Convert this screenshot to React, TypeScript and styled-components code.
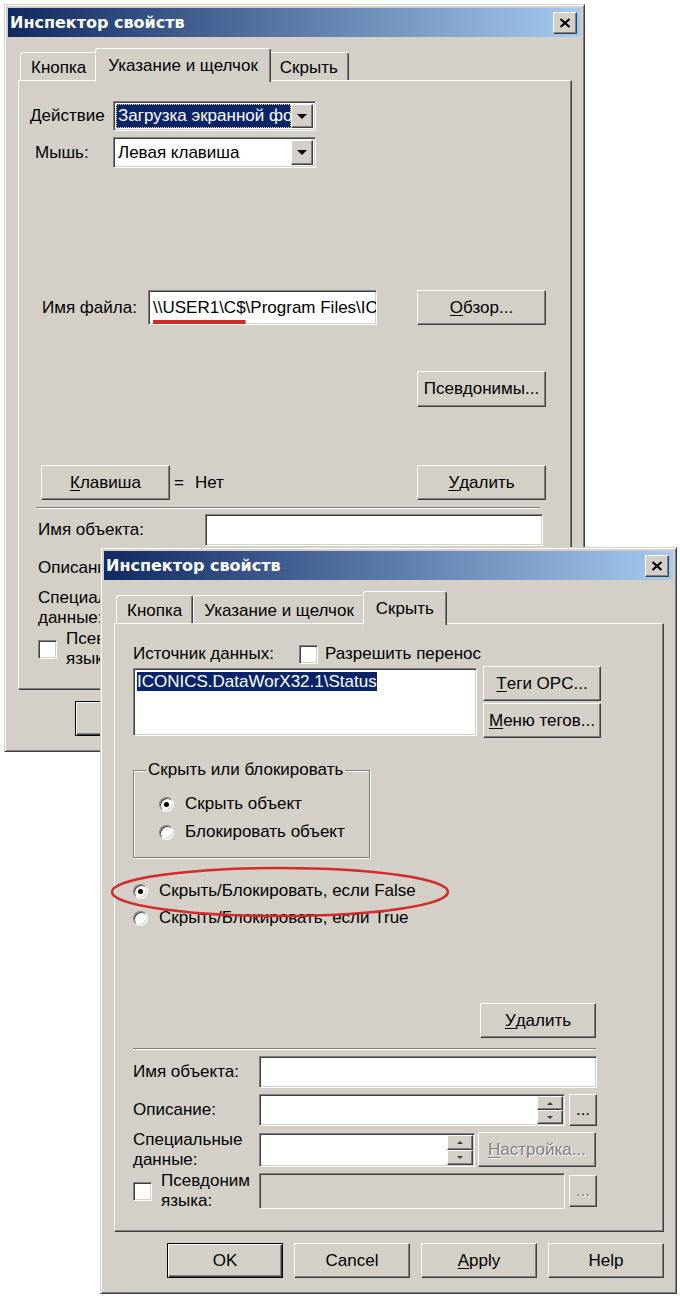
import React from 'react';
import styled, { createGlobalStyle, css } from 'styled-components';

const FACE = '#d4d0c8';
const SHADOW = '#808080';
const DARK = '#404040';
const NAVY = '#0a246a';

const GlobalStyle = createGlobalStyle`
  html, body { margin: 0; padding: 0; background: #fff; }
  body {
    font-family: "Liberation Sans", Arial, sans-serif;
    font-size: 17px;
    color: #000;
  }
`;

const raised = css`
  border: 1px solid;
  border-color: #fff ${DARK} ${DARK} #fff;
  box-shadow: inset -1px -1px ${SHADOW}, inset 1px 1px ${FACE};
`;

const sunken = css`
  border: 1px solid;
  border-color: ${SHADOW} #fff #fff ${SHADOW};
  box-shadow: inset 1px 1px ${DARK}, inset -1px -1px ${FACE};
`;

const Desktop = styled.div`
  position: relative;
  width: 680px;
  height: 1298px;
  overflow: hidden;
  background: #fff;
`;

const Window = styled.div<{ $x: number; $y: number; $w: number; $h: number }>`
  position: absolute;
  left: ${(p) => p.$x}px;
  top: ${(p) => p.$y}px;
  width: ${(p) => p.$w}px;
  height: ${(p) => p.$h}px;
  box-sizing: border-box;
  display: flex;
  flex-direction: column;
  padding: 3px;
  background: ${FACE};
  border: 1px solid;
  border-color: ${FACE} ${DARK} ${DARK} ${FACE};
  box-shadow: inset 1px 1px #fff, inset -1px -1px ${SHADOW};
`;

const TitleBar = styled.div`
  flex: none;
  height: 29px;
  display: flex;
  align-items: center;
  justify-content: space-between;
  padding: 0 4px 0 2px;
  background: linear-gradient(90deg, #112a62 0%, #a6caf0 100%);
  color: #fff;
  font: bold 16px "DejaVu Sans", Tahoma, sans-serif;
`;

const CloseButton = styled.div`
  box-sizing: border-box;
  width: 24px;
  height: 22px;
  display: flex;
  align-items: center;
  justify-content: center;
  background: ${FACE};
  ${raised};
`;

const WindowBody = styled.div`
  flex: 1;
  display: flex;
  flex-direction: column;
  padding: 11px 9px 12px 10px;
`;

const TabStrip = styled.div`
  flex: none;
  height: 32px;
  display: flex;
  align-items: flex-end;
  padding-left: 2px;
`;

const Tab = styled.div<{ $active?: boolean }>`
  box-sizing: border-box;
  position: relative;
  z-index: ${(p) => (p.$active ? 2 : 1)};
  height: ${(p) => (p.$active ? 34 : 28)}px;
  margin: 0 ${(p) => (p.$active ? -2 : 0)}px ${(p) => (p.$active ? -2 : 0)}px;
  padding: ${(p) => (p.$active ? '0 12px' : '2px 10px 0')};
  display: flex;
  align-items: center;
  white-space: nowrap;
  background: ${FACE};
  border: 1px solid;
  border-bottom: none;
  border-color: #fff ${DARK} transparent #fff;
  border-radius: 3px 3px 0 0;
  box-shadow: inset -1px 0 ${SHADOW};
`;

const Panel = styled.div<{ $pad: string }>`
  flex: 1;
  position: relative;
  display: flex;
  flex-direction: column;
  padding: ${(p) => p.$pad};
  border: 1px solid;
  border-color: #fff ${DARK} ${DARK} #fff;
  box-shadow: inset -1px -1px ${SHADOW};
`;

const Footer = styled.div`
  flex: none;
  display: flex;
  justify-content: flex-end;
  gap: 11px;
  margin-top: 11px;
`;

const Button = styled.button<{ $w: number; $h: number; $ml?: number | 'auto'; $default?: boolean }>`
  box-sizing: border-box;
  flex: none;
  width: ${(p) => p.$w}px;
  height: ${(p) => p.$h}px;
  margin-left: ${(p) => (p.$ml === 'auto' ? 'auto' : `${p.$ml ?? 0}px`)};
  padding: 0;
  display: inline-flex;
  align-items: center;
  justify-content: center;
  font: inherit;
  color: #000;
  background: ${FACE};
  white-space: nowrap;
  ${raised};
  ${(p) =>
    p.$default &&
    css`
      border-color: #000;
      box-shadow: inset 1px 1px #fff, inset -1px -1px ${DARK}, inset -2px -2px ${SHADOW};
    `}
  &:disabled {
    color: ${SHADOW};
    text-shadow: 1px 1px #fff;
  }
`;

const Key = styled.span`
  text-decoration: underline;
  text-underline-offset: 2px;
`;

const Row = styled.div<{ $h?: number; $mt?: number; $gap?: number; $top?: boolean }>`
  flex: none;
  display: flex;
  align-items: ${(p) => (p.$top ? 'flex-start' : 'center')};
  height: ${(p) => (p.$h ? `${p.$h}px` : 'auto')};
  margin-top: ${(p) => p.$mt ?? 0}px;
  gap: ${(p) => p.$gap ?? 0}px;
`;

const Label = styled.div<{ $w?: number; $indent?: number }>`
  box-sizing: border-box;
  flex: none;
  display: flex;
  align-items: center;
  gap: 9px;
  width: ${(p) => (p.$w ? `${p.$w}px` : 'auto')};
  padding-left: ${(p) => p.$indent ?? 0}px;
  white-space: nowrap;
  line-height: 20px;
`;

const Text = styled.span<{ $ml?: number }>`
  margin-left: ${(p) => p.$ml ?? 0}px;
  white-space: nowrap;
`;

const Lines = styled.span`
  line-height: 20px;
`;

const Combo = styled.div<{ $w: number; $h: number }>`
  box-sizing: border-box;
  width: ${(p) => p.$w}px;
  height: ${(p) => p.$h}px;
  display: flex;
  padding: 2px;
  background: #fff;
  ${sunken};
`;

const ComboText = styled.div<{ $selected?: boolean }>`
  flex: 1;
  min-width: 0;
  display: flex;
  align-items: center;
  padding: 0 2px;
  overflow: hidden;
  white-space: nowrap;
  ${(p) =>
    p.$selected &&
    css`
      background: ${NAVY};
      color: #fff;
      outline: 1px dotted #f2e08a;
      outline-offset: -1px;
    `}
`;

const DropButton = styled.div`
  box-sizing: border-box;
  flex: none;
  width: 22px;
  display: flex;
  align-items: center;
  justify-content: center;
  background: ${FACE};
  ${raised};
`;

const Arrow = styled.span<{ $up?: boolean; $size?: number; $color?: string }>`
  width: 0;
  height: 0;
  border-left: ${(p) => p.$size ?? 5}px solid transparent;
  border-right: ${(p) => p.$size ?? 5}px solid transparent;
  ${(p) =>
    p.$up
      ? css`border-bottom: ${p.$size ?? 5}px solid ${p.$color ?? '#000'};`
      : css`border-top: ${p.$size ?? 5}px solid ${p.$color ?? '#000'};`}
`;

const TextBox = styled.div<{ $w: number; $h: number; $disabled?: boolean }>`
  box-sizing: border-box;
  flex: none;
  width: ${(p) => p.$w}px;
  height: ${(p) => p.$h}px;
  display: flex;
  align-items: center;
  padding: 1px 1px 1px 4px;
  overflow: hidden;
  white-space: nowrap;
  background: ${(p) => (p.$disabled ? FACE : '#fff')};
  ${sunken};
`;

const Marked = styled.span`
  text-decoration: underline;
  text-decoration-color: #d22b2b;
  text-decoration-thickness: 4px;
  text-underline-offset: 7px;
  text-decoration-skip-ink: none;
`;

const Spinner = styled.div`
  align-self: stretch;
  margin-left: auto;
  width: 26px;
  display: flex;
  flex-direction: column;
`;

const SpinHalf = styled.div`
  box-sizing: border-box;
  flex: 1;
  display: flex;
  align-items: center;
  justify-content: center;
  background: ${FACE};
  ${raised};
`;

const ListBox = styled.div<{ $w: number; $h: number }>`
  box-sizing: border-box;
  flex: none;
  width: ${(p) => p.$w}px;
  height: ${(p) => p.$h}px;
  margin-top: 2px;
  padding: 3px;
  background: #fff;
  ${sunken};
`;

const Selected = styled.span`
  background: ${NAVY};
  color: #fff;
  line-height: 20px;
`;

const ButtonColumn = styled.div`
  display: flex;
  flex-direction: column;
  gap: 2px;
  margin-right: -4px;
`;

const CheckBox = styled.span<{ $ml?: number }>`
  box-sizing: border-box;
  flex: none;
  display: inline-block;
  width: 19px;
  height: 19px;
  margin-left: ${(p) => p.$ml ?? 0}px;
  background: #fff;
  ${sunken};
`;

const Radio = styled.span<{ $checked?: boolean }>`
  box-sizing: border-box;
  flex: none;
  width: 15px;
  height: 15px;
  display: flex;
  align-items: center;
  justify-content: center;
  border-radius: 50%;
  background: #fff;
  border: 1px solid;
  border-color: ${SHADOW} #fff #fff ${SHADOW};
  box-shadow: inset 1px 1px ${DARK}, inset -1px -1px ${FACE};
  &::after {
    content: '';
    width: 5px;
    height: 5px;
    border-radius: 50%;
    background: #000;
    display: ${(p) => (p.$checked ? 'block' : 'none')};
  }
`;

const RadioRow = styled.div<{ $mt?: number; $ml?: number }>`
  display: flex;
  align-items: center;
  gap: 11px;
  height: 20px;
  margin-top: ${(p) => p.$mt ?? 0}px;
  margin-left: ${(p) => p.$ml ?? 0}px;
  white-space: nowrap;
`;

const Group = styled.fieldset`
  box-sizing: border-box;
  width: 237px;
  margin: 22px 0 0;
  padding: 14px 0 15px 12px;
  border: 1px solid ${SHADOW};
  box-shadow: inset 1px 1px #fff, 1px 1px 0 #fff;
  display: flex;
  flex-direction: column;
  gap: 8px;
`;

const Legend = styled.legend`
  padding: 0 2px;
  line-height: 20px;
  background: ${FACE};
`;

const Groove = styled.div<{ $mt: number; $mx?: number }>`
  flex: none;
  margin: ${(p) => p.$mt}px ${(p) => p.$mx ?? 0}px 0;
  border-top: 1px solid ${SHADOW};
  border-bottom: 1px solid #fff;
`;

const Annotation = styled.svg`
  position: absolute;
  left: 108px;
  top: 865px;
  pointer-events: none;
`;

const TABS = ['Кнопка', 'Указание и щелчок', 'Скрыть'];

type DialogProps = {
  x: number;
  y: number;
  w: number;
  h: number;
  active: number;
  pad: string;
  children: React.ReactNode;
};

function Dialog({ x, y, w, h, active, pad, children }: DialogProps) {
  return (
    <Window $x={x} $y={y} $w={w} $h={h}>
      <TitleBar>
        <span>Инспектор свойств</span>
        <CloseButton>
          <svg width="12" height="10" viewBox="0 0 12 10">
            <path d="M1.5 1 L10.5 9 M10.5 1 L1.5 9" stroke="#000" strokeWidth="2.2" />
          </svg>
        </CloseButton>
      </TitleBar>
      <WindowBody>
        <TabStrip>
          {TABS.map((t, i) => (
            <Tab key={t} $active={i === active}>
              {t}
            </Tab>
          ))}
        </TabStrip>
        <Panel $pad={pad}>{children}</Panel>
        <Footer>
          <Button $w={116} $h={35} $default>
            OK
          </Button>
          <Button $w={116} $h={35}>Cancel</Button>
          <Button $w={116} $h={35}>
            <Key>A</Key>pply
          </Button>
          <Button $w={116} $h={35}>Help</Button>
        </Footer>
      </WindowBody>
    </Window>
  );
}

const Spin = () => (
  <Spinner>
    <SpinHalf>
      <Arrow $up $size={3} $color={DARK} />
    </SpinHalf>
    <SpinHalf>
      <Arrow $size={3} $color={DARK} />
    </SpinHalf>
  </Spinner>
);

function ObjectFields({ labelW, indent, mt }: { labelW: number; indent: number; mt: number }) {
  return (
    <>
      <Row $h={32} $mt={mt}>
        <Label $w={labelW} $indent={indent}>Имя объекта:</Label>
        <TextBox $w={338} $h={32} />
      </Row>
      <Row $h={32} $mt={6}>
        <Label $w={labelW} $indent={indent}>Описание:</Label>
        <TextBox $w={306} $h={32}>
          <Spin />
        </TextBox>
        <Button $w={28} $h={32} $ml={4}>...</Button>
      </Row>
      <Row $h={35} $mt={6}>
        <Label $w={labelW} $indent={indent}>
          <Lines>
            Специальные
            <br />
            данные:
          </Lines>
        </Label>
        <TextBox $w={216} $h={34}>
          <Spin />
        </TextBox>
        <Button $w={118} $h={35} $ml={3} disabled>
          <Key>Н</Key>астройка...
        </Button>
      </Row>
      <Row $h={36} $mt={6}>
        <Label $w={labelW} $indent={indent}>
          <CheckBox />
          <Lines>
            Псевдоним
            <br />
            языка:
          </Lines>
        </Label>
        <TextBox $w={306} $h={36} $disabled />
        <Button $w={28} $h={32} $ml={4} disabled>
          ...
        </Button>
      </Row>
    </>
  );
}

export default function App() {
  return (
    <Desktop>
      <GlobalStyle />

      <Dialog x={4} y={4} w={581} h={748} active={1} pad="20px 25px 0 11px">
        <Row $h={30}>
          <Label $w={83}>Действие</Label>
          <Combo $w={203} $h={30}>
            <ComboText $selected>Загрузка экранной формы</ComboText>
            <DropButton>
              <Arrow />
            </DropButton>
          </Combo>
        </Row>
        <Row $h={31} $mt={6}>
          <Label $w={83} $indent={5}>Мышь:</Label>
          <Combo $w={203} $h={31}>
            <ComboText>Левая клавиша</ComboText>
            <DropButton>
              <Arrow />
            </DropButton>
          </Combo>
        </Row>
        <Row $h={35} $mt={122}>
          <Label $w={118} $indent={12}>Имя файла:</Label>
          <TextBox $w={229} $h={35}>
            <Marked>{'\\\\USER1\\C$'}</Marked>
            {'\\Program Files\\ICONICS'}
          </TextBox>
          <Button $w={129} $h={35} $ml="auto">
            <Key>О</Key>бзор...
          </Button>
        </Row>
        <Row $h={36} $mt={46}>
          <Button $w={129} $h={36} $ml="auto">
            Псевдонимы...
          </Button>
        </Row>
        <Row $h={35} $mt={58}>
          <Button $w={129} $h={35} $ml={11}>
            <Key>К</Key>лавиша
          </Button>
          <Text $ml={4}>=</Text>
          <Text $ml={11}>Нет</Text>
          <Button $w={129} $h={35} $ml="auto">
            <Key>У</Key>далить
          </Button>
        </Row>
        <Groove $mt={7} $mx={6} />
        <ObjectFields labelW={175} indent={8} mt={5} />
      </Dialog>

      <Dialog x={100} y={547} w={577} h={747} active={2} pad="20px 67px 0 18px">
        <Row $h={20}>
          <Label>Источник данных:</Label>
          <CheckBox $ml={25} />
          <Text $ml={7}>Разрешить перенос</Text>
        </Row>
        <Row $mt={2} $gap={6} $top>
          <ListBox $w={344} $h={68}>
            <Selected>{'ICONICS.DataWorX32.1\\Status'}</Selected>
          </ListBox>
          <ButtonColumn>
            <Button $w={118} $h={35}>
              <Key>Т</Key>еги OPC...
            </Button>
            <Button $w={118} $h={35}>
              <Key>М</Key>еню тегов...
            </Button>
          </ButtonColumn>
        </Row>
        <Group>
          <Legend>Скрыть или блокировать</Legend>
          <RadioRow $ml={13}>
            <Radio $checked />
            Скрыть объект
          </RadioRow>
          <RadioRow $ml={13}>
            <Radio />
            Блокировать объект
          </RadioRow>
        </Group>
        <RadioRow $mt={23}>
          <Radio $checked />
          Скрыть/Блокировать, если False
        </RadioRow>
        <RadioRow $mt={7}>
          <Radio />
          Скрыть/Блокировать, если True
        </RadioRow>
        <Row $h={35} $mt={75}>
          <Button $w={116} $h={35} $ml="auto">
            <Key>У</Key>далить
          </Button>
        </Row>
        <Groove $mt={10} />
        <ObjectFields labelW={126} indent={0} mt={6} />
      </Dialog>

      <Annotation width="344" height="54" viewBox="0 0 344 54">
        <ellipse cx="172" cy="27" rx="168" ry="24" fill="none" stroke="#d22b2b" strokeWidth="2.5" />
      </Annotation>
    </Desktop>
  );
}
